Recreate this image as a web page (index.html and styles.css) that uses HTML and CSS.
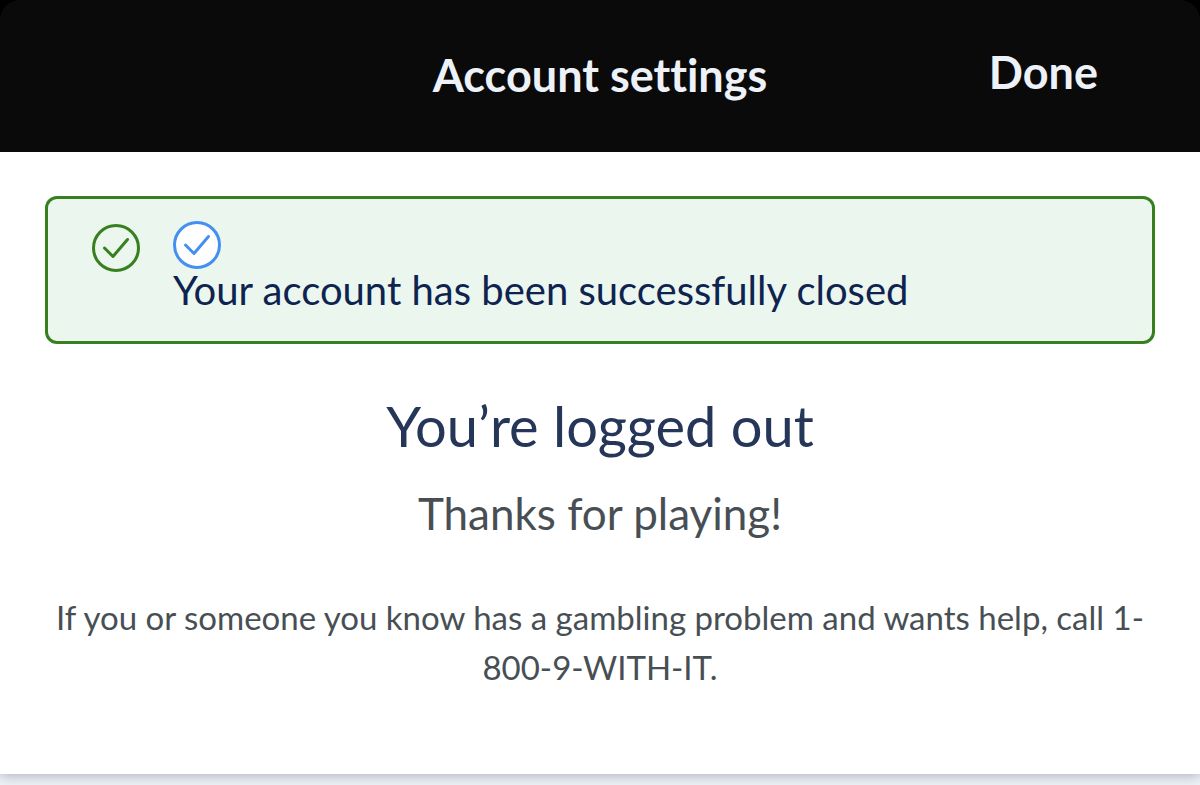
FILE: index.html
```html
<!DOCTYPE html>
<html lang="en">
<head>
    <meta charset="UTF-8">
    <meta name="viewport" content="width=device-width, initial-scale=1.0">
    <title>Account settings</title>
    <link rel="stylesheet" href="styles.css">
</head>
<body>
    <div class="modal">
        <div class="modal-top">
            <header class="modal-header">
                <h1>Account settings</h1>
                <button type="button" class="done">Done</button>
            </header>
        </div>
        <main class="modal-body">
            <div class="alert" role="status">
                <svg class="icon icon-success" viewBox="0 0 48 48" aria-hidden="true">
                    <circle cx="24" cy="24" r="22.5"/>
                    <path d="M12.5 24L21 32.5L35.5 15.5"/>
                </svg>
                <div class="alert-text">
                    <svg class="icon icon-info" viewBox="0 0 48 48" aria-hidden="true">
                        <circle cx="24" cy="24" r="22.5"/>
                        <path d="M12.5 24L21 32.5L35.5 15.5"/>
                    </svg>
                    <p>Your account has been successfully closed</p>
                </div>
            </div>
            <h2>You’re logged out</h2>
            <p class="thanks">Thanks for playing!</p>
            <p class="help">If you or someone you know has a gambling problem and wants help, call 1-800-9-WITH-IT.</p>
        </main>
    </div>
</body>
</html>
```
FILE: styles.css
```css
body {
    margin: 0;
    min-height: 100vh;
    font-family: Lato, "Open Sans", sans-serif;
    font-variant-ligatures: none;
    background-color: #edf1f8;
}
h1, h2, p {
    margin: 0;
    font-weight: normal;
}
.modal {
    background-color: #fff;
    box-shadow: 0 2px 12px rgba(0, 0, 0, 0.25);
}
.modal-top {
    background-color: #000;
}
.modal-header {
    display: grid;
    grid-template-columns: 1fr auto 1fr;
    align-items: center;
    box-sizing: border-box;
    height: 152px;
    padding-bottom: 2px;
    border-radius: 20px 20px 0 0;
    background-color: #0a0a0a;
    color: #edf1f8;
}
.modal-header h1 {
    grid-column: 2;
    font-size: 45px;
    font-weight: bold;
}
.done {
    justify-self: end;
    margin-right: 102px;
    padding: 0 0 6px;
    border: none;
    background: none;
    color: inherit;
    font-family: inherit;
    font-size: 45px;
    font-weight: bold;
    cursor: pointer;
}
.modal-body {
    padding: 44px 45px 82px;
    text-align: center;
}
.alert {
    display: flex;
    gap: 33px;
    padding: 22px 44px 30px;
    border: 3px solid #38801f;
    border-radius: 12px;
    background-color: #eaf6ee;
    color: #0e2350;
    text-align: left;
}
.icon {
    display: block;
    flex: none;
    width: 48px;
    height: 48px;
    fill: none;
    stroke-width: 3;
    stroke-linecap: round;
    stroke-linejoin: round;
}
.icon-success {
    margin-top: 3px;
    stroke: #38801f;
}
.icon-info {
    stroke: #458ff0;
}
.icon-info circle {
    fill: #fff;
}
.alert-text p {
    font-size: 40px;
    line-height: 42px;
}
h2 {
    margin-top: 50px;
    color: #253659;
    font-size: 56px;
    line-height: 64px;
}
.thanks {
    margin-top: 27px;
    color: #484f54;
    font-size: 44px;
    line-height: 56px;
}
.help {
    margin-top: 51px;
    color: #484f54;
    font-size: 33px;
    line-height: 50px;
}
```
